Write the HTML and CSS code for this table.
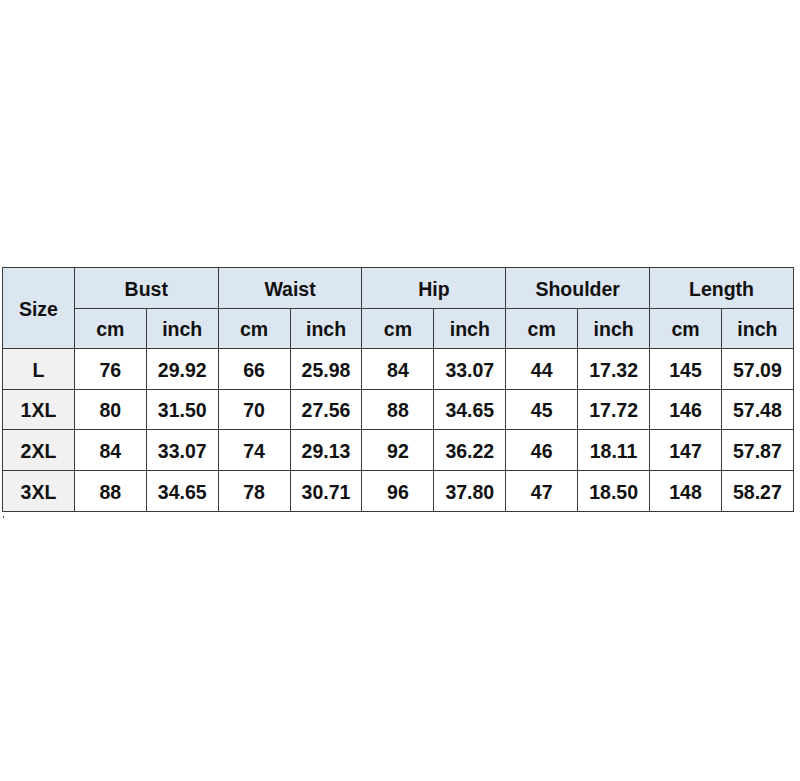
FILE: index.html
```html
<!DOCTYPE html>
<html>
<head>
<meta charset="utf-8">
<link rel="stylesheet" href="styles.css">
</head>
<body>
<div class="page">
<table class="chart">
  <colgroup>
    <col class="c"><col class="c"><col class="c"><col class="c"><col class="c"><col class="c"><col class="c"><col class="c"><col class="c"><col class="c"><col class="c">
  </colgroup>
  <thead>
    <tr class="h1">
      <th rowspan="2">Size</th>
      <th colspan="2">Bust</th>
      <th colspan="2">Waist</th>
      <th colspan="2">Hip</th>
      <th colspan="2">Shoulder</th>
      <th colspan="2">Length</th>
    </tr>
    <tr class="h2">
      <th>cm</th><th>inch</th><th>cm</th><th>inch</th><th>cm</th><th>inch</th><th>cm</th><th>inch</th><th>cm</th><th>inch</th>
    </tr>
  </thead>
  <tbody>
    <tr><th class="size">L</th><td>76</td><td>29.92</td><td>66</td><td>25.98</td><td>84</td><td>33.07</td><td>44</td><td>17.32</td><td>145</td><td>57.09</td></tr>
    <tr><th class="size">1XL</th><td>80</td><td>31.50</td><td>70</td><td>27.56</td><td>88</td><td>34.65</td><td>45</td><td>17.72</td><td>146</td><td>57.48</td></tr>
    <tr><th class="size">2XL</th><td>84</td><td>33.07</td><td>74</td><td>29.13</td><td>92</td><td>36.22</td><td>46</td><td>18.11</td><td>147</td><td>57.87</td></tr>
    <tr><th class="size">3XL</th><td>88</td><td>34.65</td><td>78</td><td>30.71</td><td>96</td><td>37.80</td><td>47</td><td>18.50</td><td>148</td><td>58.27</td></tr>
  </tbody>
</table>
<div class="dot"></div>
</div>
</body>
</html>
```
FILE: styles.css
```css
html, body {
  margin: 0;
  padding: 0;
  background: #ffffff;
}
.page {
  padding: 267px 0 0 2px;
  font-family: "Liberation Sans", Arial, sans-serif;
}
.chart {
  border-collapse: collapse;
  table-layout: fixed;
  width: 791px;
  border: 1px solid #3a3a3a;
}
.chart col.c {
  width: 71.9px;
}
.chart th, .chart td {
  border: 1px solid #3a3a3a;
  text-align: center;
  vertical-align: middle;
  font-weight: bold;
  font-size: 19.5px;
  color: #111;
  padding: 3px 0 0 0;
  height: 36.6px;
  line-height: 1;
}
.chart thead th {
  background: #dce6f0;
}
.chart th.size {
  background: #f1f1f1;
}
.chart td {
  background: #ffffff;
}
.dot {
  width: 1px;
  height: 2px;
  background: #555;
  margin: 4px 0 0 1px;
}
```
